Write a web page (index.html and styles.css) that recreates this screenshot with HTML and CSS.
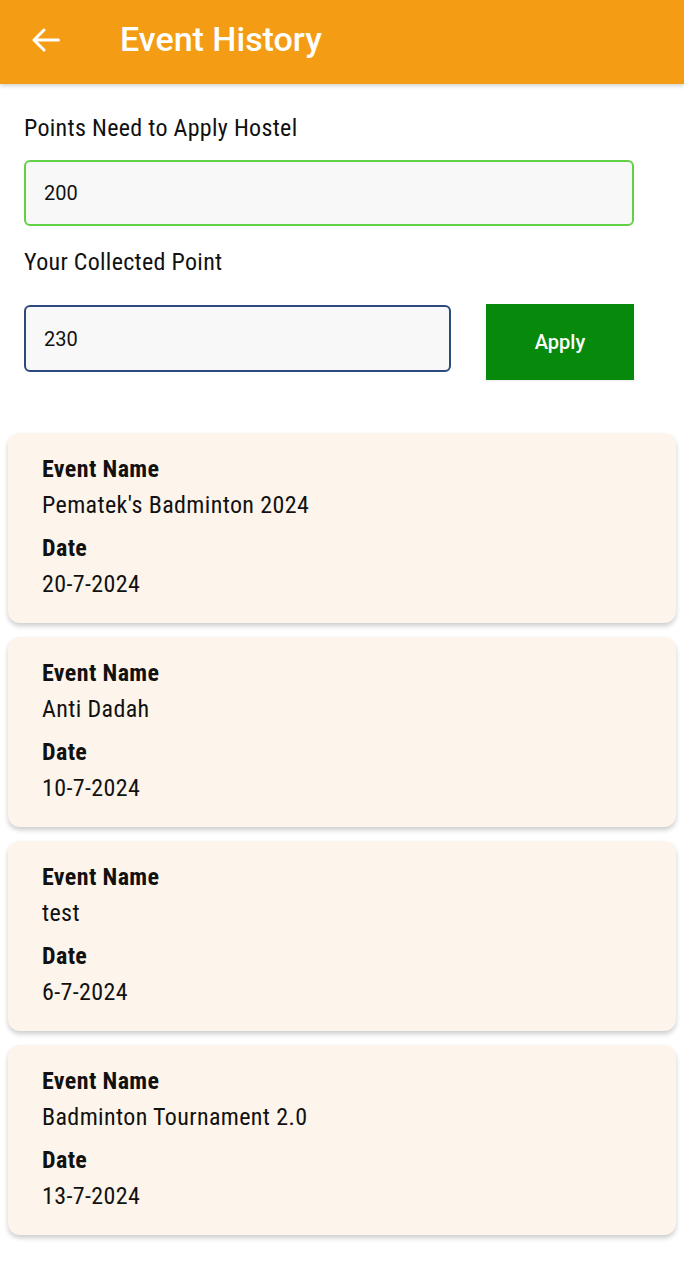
FILE: index.html
```html
<!DOCTYPE html>
<html lang="en">
<head>
<meta charset="utf-8">
<title>Event History</title>
<link rel="stylesheet" href="styles.css">
</head>
<body>
<header class="appbar">
  <span class="back">
    <svg width="28" height="24" viewBox="0 0 28 24" fill="none" stroke="#fff" stroke-width="3" stroke-linecap="round" stroke-linejoin="round"><path d="M26.5 12H2M12 2L2 12l10 10"/></svg>
  </span>
  <h1 class="title">Event History</h1>
</header>
<main>
  <section class="form">
    <label class="label">Points Need to Apply Hostel</label>
    <div class="field field-green">200</div>
    <label class="label label-2">Your Collected Point</label>
    <div class="row">
      <div class="field field-blue">230</div>
      <button class="apply">Apply</button>
    </div>
  </section>
  <section class="list">
    <div class="card">
      <div class="group"><div class="k">Event Name</div><div class="v">Pematek's Badminton 2024</div></div>
      <div class="group"><div class="k">Date</div><div class="v">20-7-2024</div></div>
    </div>
    <div class="card">
      <div class="group"><div class="k">Event Name</div><div class="v">Anti Dadah</div></div>
      <div class="group"><div class="k">Date</div><div class="v">10-7-2024</div></div>
    </div>
    <div class="card">
      <div class="group"><div class="k">Event Name</div><div class="v">test</div></div>
      <div class="group"><div class="k">Date</div><div class="v">6-7-2024</div></div>
    </div>
    <div class="card">
      <div class="group"><div class="k">Event Name</div><div class="v">Badminton Tournament 2.0</div></div>
      <div class="group"><div class="k">Date</div><div class="v">13-7-2024</div></div>
    </div>
  </section>
</main>
</body>
</html>
```
FILE: styles.css
```css
* { box-sizing: border-box; }
html, body { margin: 0; padding: 0; background: #fff; }
body { font-family: Roboto, "Noto Sans", sans-serif; color: #111; }

.appbar {
  height: 84px;
  background: #F39C14;
  display: flex;
  align-items: center;
  padding-left: 32px;
  box-shadow: 0 2px 4px rgba(0,0,0,0.18);
}
.back { display: flex; width: 28px; height: 24px; margin-top: -4px; }
.title {
  margin: -6px 0 0 60px;
  color: #fff;
  font-family: Roboto, sans-serif;
  font-weight: 500;
  font-size: 34px;
}

.form { padding: 26px 50px 0 24px; display: flex; flex-direction: column; }
.label {
  font-family: "Roboto Condensed", Roboto, sans-serif;
  font-stretch: 75%;
  font-size: 24px;
  letter-spacing: 0.3px;
  line-height: 36px;
  color: #111;
}
.field {
  margin-top: 14px;
  height: 66px;
  border-radius: 6px;
  background: #F8F8F8;
  display: flex;
  align-items: center;
  padding-left: 18px;
  font-size: 20px;
  color: #111;
}
.field-green { border: 2px solid #63D148; }
.label-2 { margin-top: 18px; }
.row { display: flex; align-items: flex-start; gap: 35px; margin-top: 24px; }
.field-blue { margin-top: 1px; height: 67px; flex: 0 0 427px; border: 2px solid #2B4B7C; }
.apply {
  flex: 0 0 148px;
  height: 76px;
  border: 0;
  background: #078A0B;
  color: #fff;
  font-family: Roboto, sans-serif;
  font-weight: 500;
  font-size: 20px;
  padding: 0;
  box-shadow: 0 1px 2px rgba(0,0,0,0.08);
}

.list { padding: 53px 8px 40px; display: flex; flex-direction: column; gap: 14px; }
.card {
  background: #FDF5EB;
  border-radius: 12px;
  height: 190px;
  padding: 18px 34px 0;
  box-shadow: 0 3px 5px rgba(0,0,0,0.2);
  font-family: "Roboto Condensed", Roboto, sans-serif;
  font-stretch: 75%;
  font-size: 24px;
  letter-spacing: 0.38px;
  line-height: 36px;
  color: #111;
  display: flex;
  flex-direction: column;
  gap: 7px;
}
.k { font-weight: 700; }
.v { font-weight: 400; }
```
